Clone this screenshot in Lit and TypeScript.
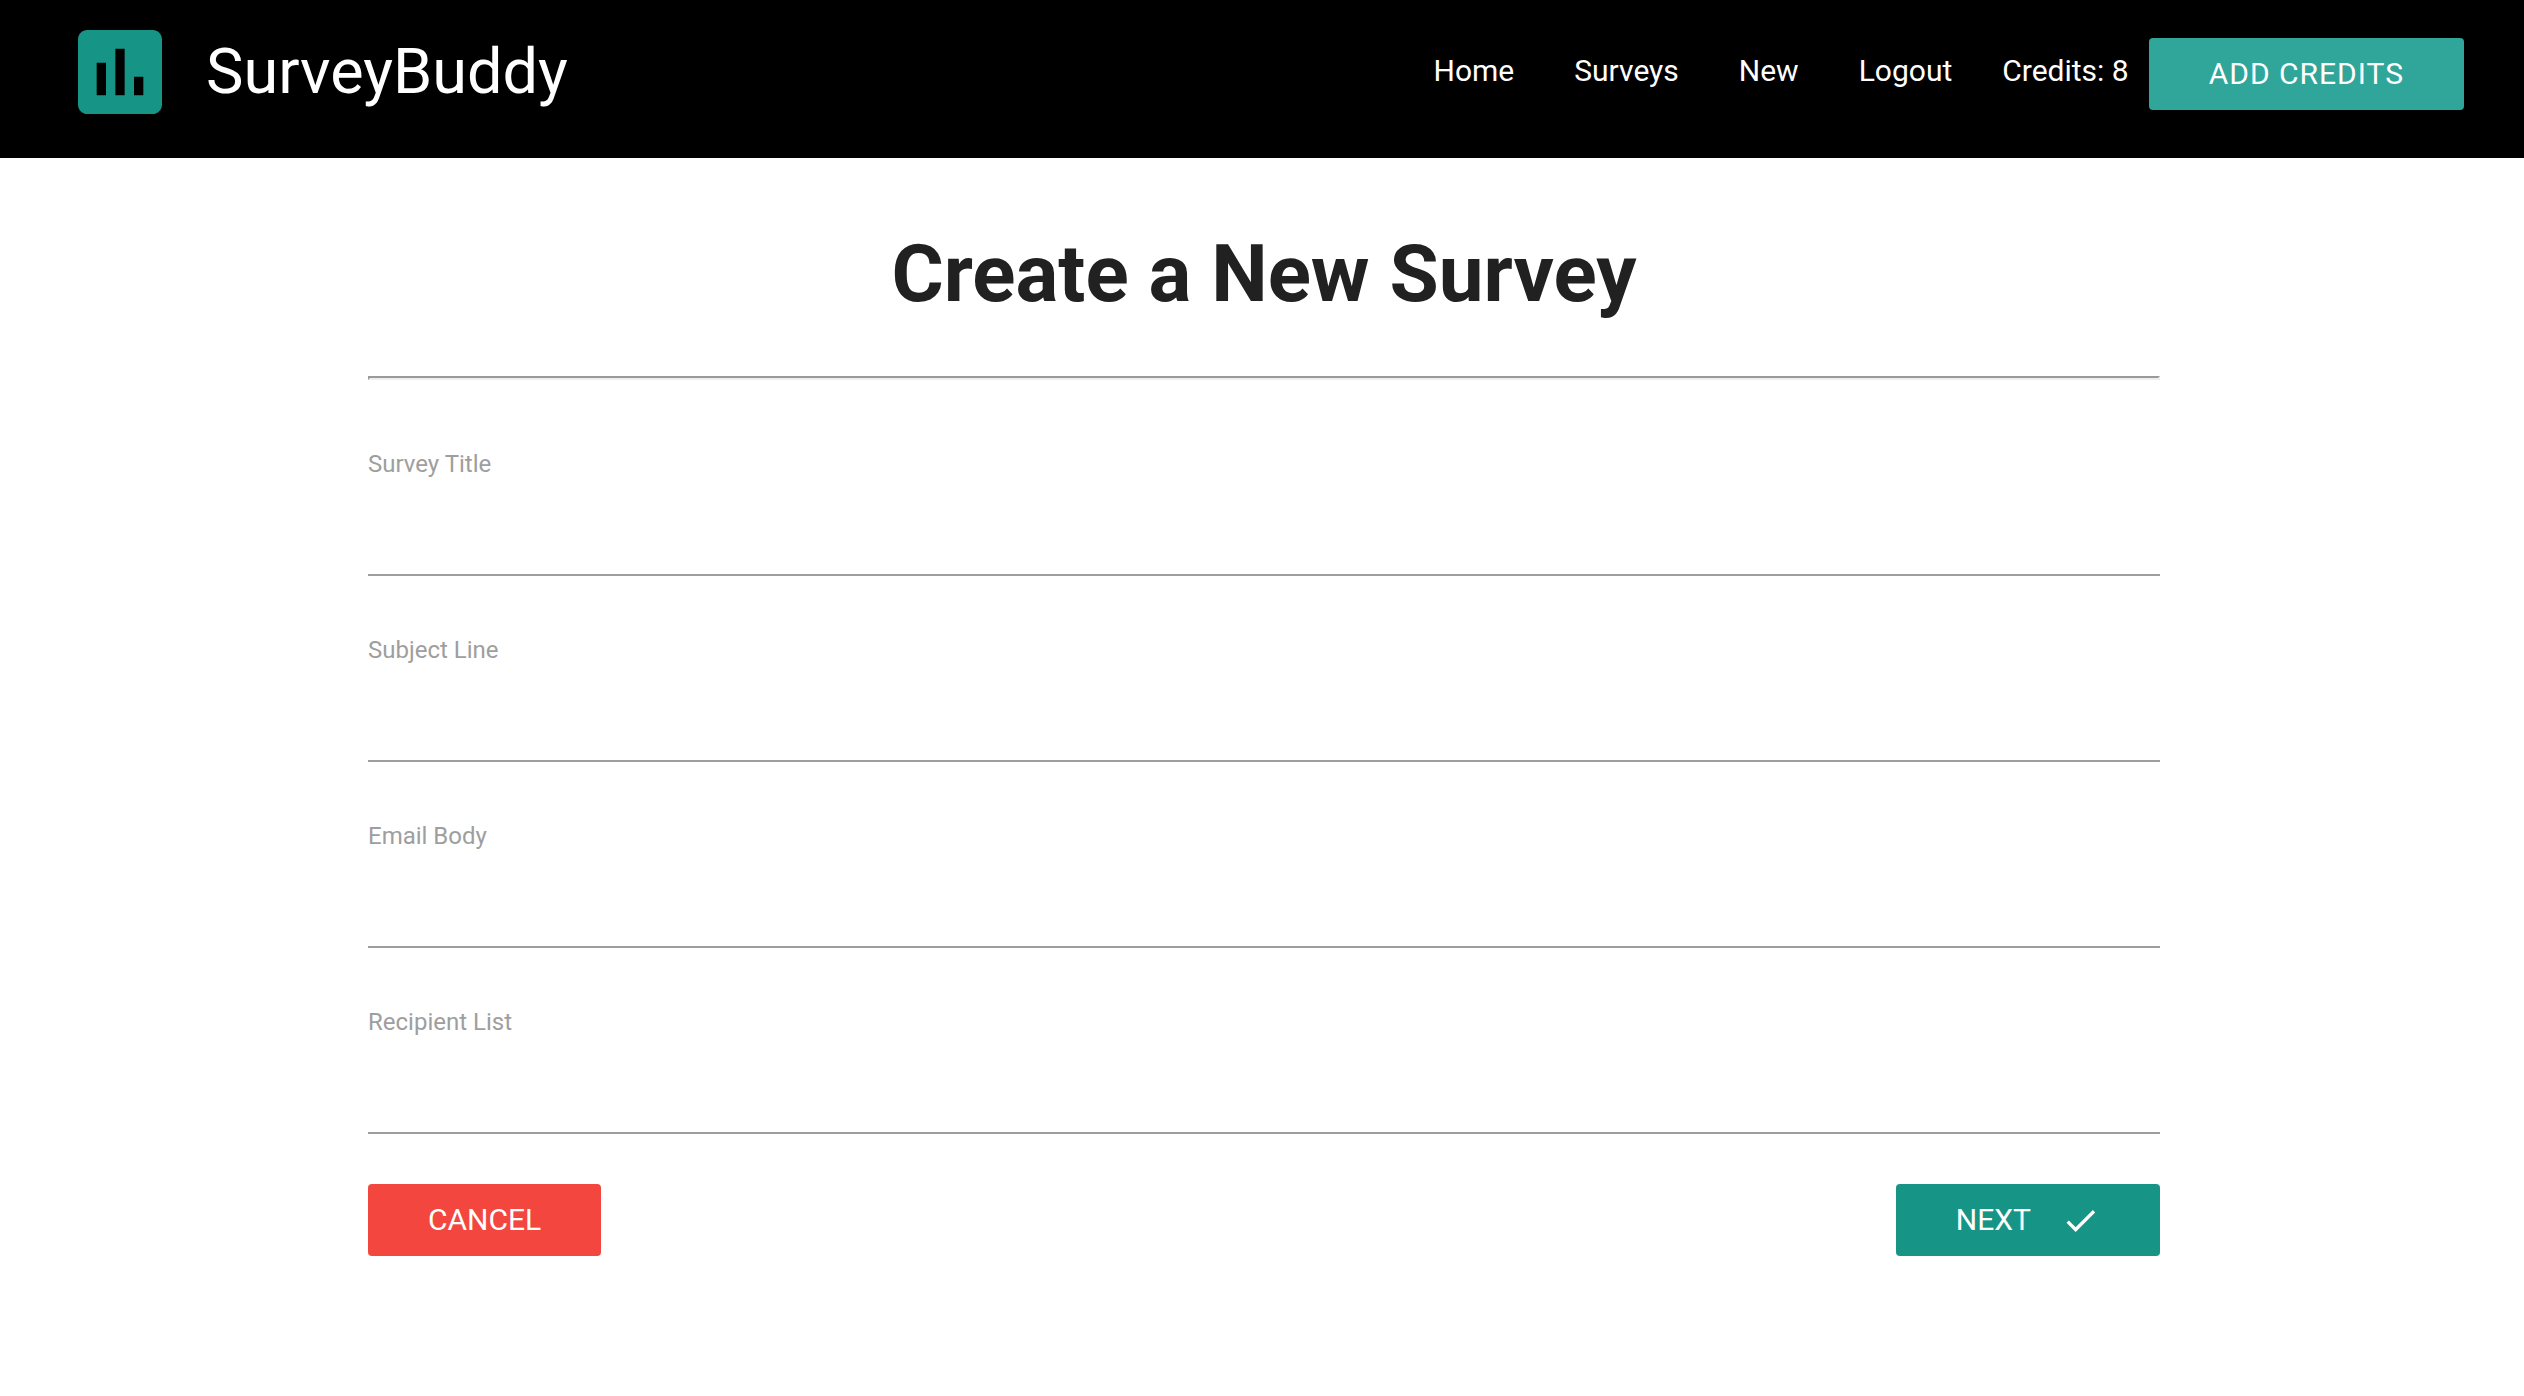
import { LitElement, html, css } from "lit";
import { customElement } from "lit/decorators.js";

interface Field {
  id: string;
  label: string;
}

const FIELDS: Field[] = [
  { id: "title", label: "Survey Title" },
  { id: "subject", label: "Subject Line" },
  { id: "body", label: "Email Body" },
  { id: "recipients", label: "Recipient List" },
];

const LINKS = ["Home", "Surveys", "New", "Logout"];

@customElement("survey-header")
class SurveyHeader extends LitElement {
  static styles = css`
    :host {
      display: block;
      background: #000;
      color: #fff;
    }
    .bar {
      display: flex;
      align-items: flex-start;
      justify-content: space-between;
      padding: 0 60px 14px 64px;
    }
    .brand {
      display: flex;
      align-items: center;
      gap: 30px;
      height: 144px;
      color: inherit;
      text-decoration: none;
      font-size: 63px;
      line-height: 142px;
    }
    .logo {
      width: 112px;
      height: 112px;
      fill: #169587;
    }
    .menu {
      display: flex;
      align-items: center;
      height: 142px;
      margin: 0;
      padding: 0;
      list-style: none;
      font-size: 30px;
      line-height: 142px;
    }
    .link {
      display: block;
      padding: 0 30px;
      color: inherit;
      text-decoration: none;
    }
    .credits {
      margin: 0 20px;
    }
    .add {
      display: block;
      height: 72px;
      margin-top: 6px;
      padding: 0 60px;
      border: 0;
      border-radius: 4px;
      background: #30a599;
      color: #fff;
      font: 400 30px/72px Roboto, sans-serif;
      letter-spacing: 1px;
      text-transform: uppercase;
    }
  `;

  render() {
    return html`
      <header class="bar">
        <a class="brand" href="#">
          <svg class="logo" viewBox="0 0 24 24" aria-hidden="true">
            <path
              d="M19 3H5c-1.1 0-2 .9-2 2v14c0 1.1.9 2 2 2h14c1.1 0 2-.9 2-2V5c0-1.1-.9-2-2-2zM9 17H7v-7h2v7zm4 0h-2V7h2v10zm4 0h-2v-4h2v4z"
            />
          </svg>
          <span>SurveyBuddy</span>
        </a>
        <nav>
          <ul class="menu">
            ${LINKS.map(
              (name) => html`<li><a class="link" href="#">${name}</a></li>`
            )}
            <li class="credits">Credits: 8</li>
            <li><button class="add" type="button">Add Credits</button></li>
          </ul>
        </nav>
      </header>
    `;
  }
}

@customElement("survey-form")
class SurveyForm extends LitElement {
  static styles = css`
    :host {
      display: block;
    }
    .fields {
      display: grid;
      gap: 56px;
    }
    .field {
      display: flex;
      flex-direction: column;
    }
    .label {
      color: #9e9e9e;
      font-size: 24px;
      line-height: 36px;
    }
    .input {
      width: 100%;
      height: 94px;
      padding: 0;
      border: 0;
      border-bottom: 2px solid #9e9e9e;
      border-radius: 0;
      outline: 0;
      box-sizing: border-box;
      background: transparent;
      color: #212121;
      font: 400 30px Roboto, sans-serif;
    }
    .actions {
      display: flex;
      justify-content: space-between;
      margin-top: 50px;
    }
    .button {
      display: flex;
      align-items: center;
      gap: 30px;
      height: 72px;
      padding: 0 60px;
      border: 0;
      border-radius: 4px;
      color: #fff;
      font: 400 30px/72px Roboto, sans-serif;
      text-transform: uppercase;
    }
    .cancel {
      background: #f3463e;
    }
    .next {
      background: #169587;
    }
    .check {
      width: 39px;
      height: 39px;
      fill: currentColor;
    }
  `;

  render() {
    return html`
      <form @submit=${(e: Event) => e.preventDefault()}>
        <div class="fields">
          ${FIELDS.map(
            (f) => html`
              <div class="field">
                <label class="label" for=${f.id}>${f.label}</label>
                <input class="input" id=${f.id} name=${f.id} type="text" />
              </div>
            `
          )}
        </div>
        <div class="actions">
          <button class="button cancel" type="button">Cancel</button>
          <button class="button next" type="submit">
            Next
            <svg class="check" viewBox="0 0 24 24" aria-hidden="true">
              <path d="M9 16.2L4.8 12l-1.4 1.4L9 19 21 7l-1.4-1.4L9 16.2z" />
            </svg>
          </button>
        </div>
      </form>
    `;
  }
}

@customElement("app-root")
class AppRoot extends LitElement {
  static styles = css`
    :host {
      display: block;
      min-height: 100vh;
      background: #fff;
      color: #212121;
      font-family: Roboto, sans-serif;
    }
    .page {
      max-width: 1792px;
      margin: 0 auto;
      padding: 58px 0 60px 4px;
    }
    .title {
      margin: 0 0 44px;
      font-size: 80px;
      font-weight: 700;
      line-height: 116px;
      text-align: center;
    }
    .rule {
      margin: 0 0 66px;
      border: 2px solid;
      border-color: #9a9a9a #eee #eee #9a9a9a;
    }
  `;

  render() {
    return html`
      <survey-header></survey-header>
      <main class="page">
        <h1 class="title">Create a New Survey</h1>
        <hr class="rule" />
        <survey-form></survey-form>
      </main>
    `;
  }
}
